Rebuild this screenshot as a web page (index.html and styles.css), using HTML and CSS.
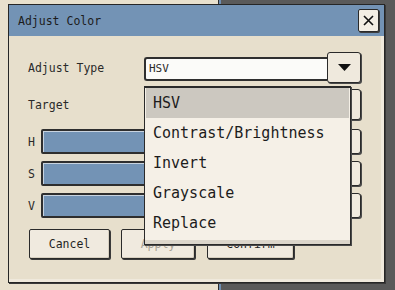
FILE: index.html
```html
<!DOCTYPE html>
<html lang="en">
<head>
  <meta charset="UTF-8">
  <title>Adjust Color</title>
  <link rel="stylesheet" href="styles.css">
</head>
<body>
  <div class="desk">
    <div class="desk-left"></div>
    <div class="desk-right"></div>
  </div>

  <div class="dialog">
    <div class="titlebar">
      <span class="title">Adjust Color</span>
      <button class="close">
        <svg width="11" height="11" viewBox="0 0 11 11"><path d="M1 1L10 10M10 1L1 10" stroke="#111" stroke-width="1.6" fill="none"/></svg>
      </button>
    </div>

    <div class="content">
      <div class="row row-combo">
        <span class="label">Adjust Type</span>
        <div class="combo">
          <div class="combo-field">HSV</div>
          <div class="combo-btn">
            <svg width="13" height="7" viewBox="0 0 13 7"><path d="M0 0H13L6.5 7Z" fill="#111"/></svg>
          </div>
        </div>
      </div>

      <div class="row row-target">
        <span class="label">Target</span>
        <div class="combo">
          <div class="combo-field"></div>
          <div class="combo-btn"></div>
        </div>
      </div>

      <div class="row row-slider">
        <span class="label short">H</span>
        <div class="slider"></div>
        <div class="value"></div>
      </div>
      <div class="row row-slider">
        <span class="label short">S</span>
        <div class="slider"></div>
        <div class="value"></div>
      </div>
      <div class="row row-slider">
        <span class="label short">V</span>
        <div class="slider"></div>
        <div class="value"></div>
      </div>

      <div class="buttons">
        <button class="btn btn-cancel">Cancel</button>
        <button class="btn btn-apply" disabled>Apply</button>
        <button class="btn btn-confirm">Confirm</button>
      </div>
    </div>

    <ul class="dropdown">
      <li class="selected">HSV</li>
      <li>Contrast/Brightness</li>
      <li>Invert</li>
      <li>Grayscale</li>
      <li>Replace</li>
    </ul>
  </div>
</body>
</html>
```

FILE: styles.css
```css
* {
  margin: 0;
  padding: 0;
  box-sizing: border-box;
}
body {
  width: 395px;
  height: 290px;
  overflow: hidden;
  position: relative;
  font-family: "DejaVu Sans Mono", "Liberation Mono", monospace;
  color: #2a2a2a;
}
.desk {
  display: flex;
  height: 100%;
}
.desk-left {
  width: 221px;
  background: #e8e0cd;
  border-right: 2px solid #6f8fb3;
  box-shadow: inset -1px 0 0 #2c2c2c;
}
.desk-right {
  flex: 1;
  background: #5a5a5a;
}

.dialog {
  position: absolute;
  left: 8px;
  top: 4px;
  width: 377px;
  height: 279px;
  background: #e7dfcc;
  border: 1px solid #262626;
  box-shadow: inset -3px -3px 0 #efe9dc, 1px 1px 0 #3a3a3a;
}
.titlebar {
  height: 31px;
  background: #7393b5;
  display: flex;
  align-items: center;
  justify-content: space-between;
  padding: 0 5px 0 9px;
}
.title {
  font-size: 11.5px;
  color: #1c1c1c;
}
.close {
  width: 21px;
  height: 23px;
  background: #f3eee4;
  border: 1px solid #2a2a2a;
  border-radius: 2px;
  box-shadow: 1px 1px 0 #3d3d3d;
  display: flex;
  align-items: center;
  justify-content: center;
}

.content {
  padding: 16px 23px 0 19px;
}
.row {
  display: flex;
  align-items: center;
}
.label {
  font-size: 11.5px;
  width: 116px;
  flex: none;
}
.label.short {
  width: 13px;
}
.row-combo {
  height: 31px;
}
.row-target {
  height: 31px;
  margin-top: 6px;
}
.combo {
  flex: 1;
  display: flex;
  align-items: center;
}
.combo-field {
  flex: 1;
  height: 24px;
  margin-top: 3px;
  background: #fbfbf9;
  border: 2px solid #2f2f2f;
  border-right: none;
  border-radius: 3px 0 0 3px;
  font-size: 11px;
  line-height: 20px;
  padding-left: 3px;
}
.combo-btn {
  width: 34px;
  height: 31px;
  background: #efe9dd;
  border: 1px solid #2a2a2a;
  border-radius: 3px;
  box-shadow: 1px 1px 0 #4a4a4a;
  display: flex;
  align-items: center;
  justify-content: center;
}
.row-slider {
  height: 25px;
  margin-top: 7px;
}
.row-target + .row-slider {
  margin-top: 9px;
}
.slider {
  flex: 1;
  height: 25px;
  background: #7393b5;
  border: 2px solid #2e2e2e;
  border-radius: 2px;
  box-shadow: inset 1px 1px 0 #c8d3df;
}
.value {
  width: 56px;
  height: 25px;
  margin-left: 6px;
  background: #f1ebdf;
  border: 1px solid #2a2a2a;
  border-radius: 3px;
  box-shadow: 1px 1px 0 #4a4a4a;
}

.buttons {
  display: flex;
  gap: 11px;
  margin-top: 11px;
  padding-left: 1px;
}
.btn {
  height: 30px;
  font-family: inherit;
  font-size: 11.5px;
  color: #1e1e1e;
  background: #f0eadf;
  border: 1px solid #2a2a2a;
  border-radius: 2px;
  box-shadow: 1px 1px 0 #3a3a3a, inset -1px -1px 0 #d8d0c0;
}
.btn-cancel {
  width: 81px;
}
.btn-apply {
  width: 74px;
  color: #a8a296;
}
.btn-confirm {
  width: 87px;
  margin-left: 1px;
}

.dropdown {
  position: absolute;
  left: 135px;
  top: 81px;
  width: 207px;
  height: 159px;
  list-style: none;
  background: #f5f0e7;
  border: 1px solid #2a2a2a;
  border-top: 2px solid #2a2a2a;
  box-shadow: inset 0 -4px 0 #dcd6cb, 1px 1px 0 #4a4a4a;
  padding: 0 1px;
}
.dropdown li {
  height: 30px;
  line-height: 30px;
  font-size: 15px;
  padding-left: 7px;
  color: #1c1c1c;
}
.dropdown li.selected {
  background: #ccc8c0;
}
```
